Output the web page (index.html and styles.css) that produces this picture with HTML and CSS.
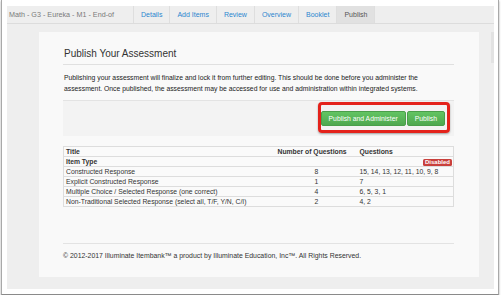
FILE: index.html
```html
<!DOCTYPE html>
<html>
<head>
<meta charset="utf-8">
<link rel="stylesheet" href="styles.css">
</head>
<body>
<div class="window">
  <div class="app">
    <div class="tabbar">
      <div class="crumb">Math - G3 - Eureka - M1 - End-of</div>
      <a class="tab">Details</a>
      <a class="tab">Add Items</a>
      <a class="tab">Review</a>
      <a class="tab">Overview</a>
      <a class="tab">Booklet</a>
      <span class="tab active">Publish</span>
    </div>
    <div class="main">
      <div class="panel">
        <h2 class="title">Publish Your Assessment</h2>
        <p class="intro">Publishing your assessment will finalize and lock it from further editing. This should be done before you administer the assessment. Once published, the assessment may be accessed for use and administration within integrated systems.</p>
        <div class="actions">
          <button class="btn">Publish and Administer</button>
          <button class="btn">Publish</button>
          <span class="annot"></span>
        </div>
        <table class="grid">
          <colgroup><col class="c1"><col class="c2"><col class="c3"></colgroup>
          <tr class="head"><td>Title</td><td class="num-h">Number of Questions</td><td>Questions</td></tr>
          <tr class="head"><td>Item Type</td><td></td><td class="right"><span class="badge">Disabled</span></td></tr>
          <tr><td>Constructed Response</td><td class="num">8</td><td>15, 14, 13, 12, 11, 10, 9, 8</td></tr>
          <tr><td>Explicit Constructed Response</td><td class="num">1</td><td>7</td></tr>
          <tr><td>Multiple Choice / Selected Response (one correct)</td><td class="num">4</td><td>6, 5, 3, 1</td></tr>
          <tr><td>Non-Traditional Selected Response (select all, T/F, Y/N, C/I)</td><td class="num">2</td><td>4, 2</td></tr>
        </table>
        <div class="foot">© 2012-2017 Illuminate Itembank™ a product by Illuminate Education, Inc™. All Rights Reserved.</div>
      </div>
      <div class="scroll"><div class="thumb"></div></div>
    </div>
  </div>
</div>
</body>
</html>
```
FILE: styles.css
```css
html, body {
  margin: 0;
  padding: 0;
  background: #fff;
}
body {
  font-family: "Liberation Sans", Arial, Helvetica, sans-serif;
  color: #333;
}
.window {
  box-sizing: border-box;
  width: 498px;
  margin-left: 1px;
  padding: 6px 4px 5px 5px;
  border-left: 1px solid #a9a9a9;
  border-right: 1px solid #a9a9a9;
  border-bottom: 1px solid #8a8a8a;
  box-shadow: 0 1px 2px rgba(0,0,0,0.35);
  background: #fff;
}
.app {
  height: 283px;
  background: #eeeeee;
  display: flex;
  flex-direction: column;
}
.tabbar {
  display: flex;
  height: 17px;
  border-bottom: 1px solid #dcdcdc;
  font-size: 7px;
  line-height: 17px;
}
.crumb {
  width: 124px;
  padding-left: 2px;
  color: #7a7a7a;
  font-size: 7.2px;
  white-space: nowrap;
}
.tab {
  border-left: 1px solid #dedede;
  padding: 0 7px;
  color: #2c86cf;
  white-space: nowrap;
}
.tab.active {
  background: #e1e1e1;
  color: #555;
  border-right: 1px solid #dedede;
}
.main {
  display: flex;
  padding-top: 8px;
}
.panel {
  box-sizing: border-box;
  width: 440px;
  height: 245px;
  margin-left: 32px;
  padding: 16px 25px 0 24px;
  background: #f9f9f9;
}
.scroll {
  margin-left: 12px;
  width: 3px;
}
.thumb {
  height: 31px;
  background: #e2e2e2;
}
.title {
  margin: 0;
  font-size: 10px;
  line-height: 12px;
  font-weight: normal;
  color: #333;
  padding: 0 0 4px 1px;
  border-bottom: 1px solid #e0e0e0;
}
.intro {
  margin: 7px 0 6px 1px;
  font-size: 6.8px;
  line-height: 11px;
  color: #222;
}
.actions {
  position: relative;
  box-sizing: border-box;
  height: 36px;
  border-top: 1px solid #e3e3e3;
  background: #f3f3f3;
  display: flex;
  justify-content: flex-end;
  align-items: flex-start;
  gap: 1px;
  padding: 10px 9px 0 0;
}
.btn {
  height: 15px;
  padding: 0 7px;
  font-family: inherit;
  font-size: 6.8px;
  color: #fff;
  border: 1px solid #4a9e4a;
  border-radius: 2px;
  background: linear-gradient(#62c462, #4fa84f);
  line-height: 13px;
}
.annot {
  position: absolute;
  left: 255px;
  top: 1px;
  width: 132px;
  height: 31px;
  box-sizing: border-box;
  border: 3px solid #e4221b;
  border-radius: 4px;
  box-shadow: 0 1px 2px rgba(0,0,0,0.35);
}
.grid {
  margin-top: 10px;
  width: 391px;
  border-collapse: collapse;
  border: 1px solid #dddddd;
  font-size: 6.8px;
  color: #333;
  background: #fafafa;
}
.grid col.c1 { width: 212px; }
.grid col.c2 { width: 82px; }
.grid td {
  height: 9px;
  padding: 0 2px;
  line-height: 9px;
  border-top: 1px solid #dddddd;
  white-space: nowrap;
}
.grid .head td {
  font-weight: bold;
}
.grid td.num { text-align: center; }
.grid td.num-h { text-align: left; }
.grid td.right { text-align: right; padding-right: 1px; }
.badge {
  display: inline-block;
  background: #c9403c;
  color: #fff;
  font-size: 6px;
  font-weight: bold;
  line-height: 7px;
  padding: 0 2px;
  border-radius: 1.5px;
  vertical-align: middle;
}
.foot {
  margin-top: 36px;
  border-top: 1px solid #e3e3e3;
  padding-top: 7px;
  font-size: 6.9px;
  line-height: 9px;
  color: #333;
}
```
